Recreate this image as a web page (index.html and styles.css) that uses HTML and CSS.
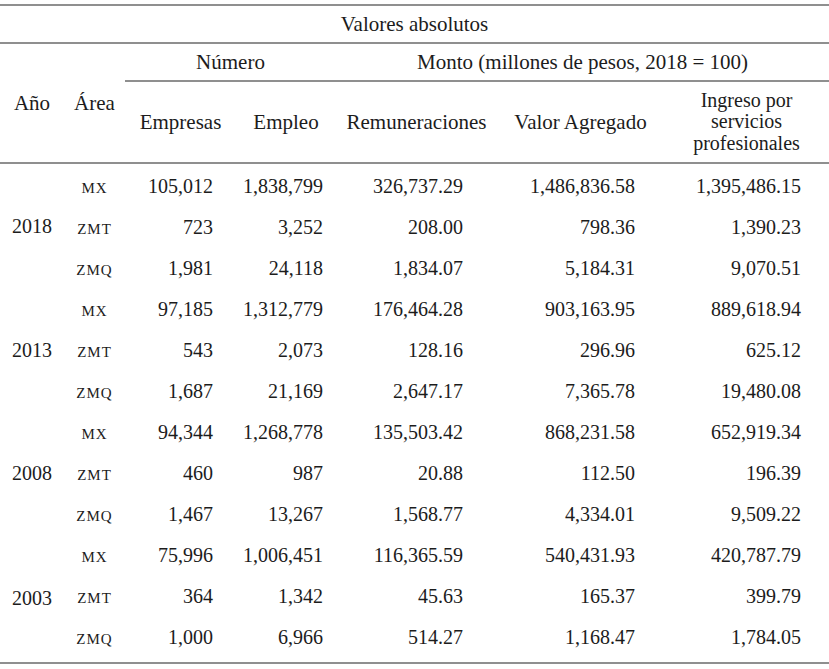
FILE: index.html
```html
<!DOCTYPE html>
<html lang="es">
<head>
<meta charset="utf-8">
<title>Valores absolutos</title>
<link rel="stylesheet" href="styles.css">
</head>
<body>
<table class="tbl">
  <colgroup>
    <col class="c-anio"><col class="c-area"><col class="c-emp"><col class="c-empleo"><col class="c-rem"><col class="c-va"><col class="c-ing">
  </colgroup>
  <thead>
    <tr class="h1">
      <th colspan="7" class="rule-b">Valores absolutos</th>
    </tr>
    <tr class="h2">
      <th rowspan="2" class="hv">Año</th>
      <th rowspan="2" class="hv">Área</th>
      <th colspan="2" class="rule-b">Número</th>
      <th colspan="3" class="rule-b">Monto (millones de pesos, 2018 = 100)</th>
    </tr>
    <tr class="h3">
      <th>Empresas</th>
      <th>Empleo</th>
      <th>Remuneraciones</th>
      <th>Valor Agregado</th>
      <th class="wrap"><span class="ln">Ingreso por</span><span class="ln">servicios</span><span class="ln">profesionales</span></th>
    </tr>
  </thead>
  <tbody>
    <tr class="first"><td rowspan="3" class="yr">2018</td><td class="ar">mx</td><td class="n emp">105,012</td><td class="n empleo">1,838,799</td><td class="n rem">326,737.29</td><td class="n va">1,486,836.58</td><td class="n ing">1,395,486.15</td></tr>
    <tr><td class="ar">zmt</td><td class="n emp">723</td><td class="n empleo">3,252</td><td class="n rem">208.00</td><td class="n va">798.36</td><td class="n ing">1,390.23</td></tr>
    <tr><td class="ar">zmq</td><td class="n emp">1,981</td><td class="n empleo">24,118</td><td class="n rem">1,834.07</td><td class="n va">5,184.31</td><td class="n ing">9,070.51</td></tr>
    <tr><td rowspan="3" class="yr">2013</td><td class="ar">mx</td><td class="n emp">97,185</td><td class="n empleo">1,312,779</td><td class="n rem">176,464.28</td><td class="n va">903,163.95</td><td class="n ing">889,618.94</td></tr>
    <tr><td class="ar">zmt</td><td class="n emp">543</td><td class="n empleo">2,073</td><td class="n rem">128.16</td><td class="n va">296.96</td><td class="n ing">625.12</td></tr>
    <tr><td class="ar">zmq</td><td class="n emp">1,687</td><td class="n empleo">21,169</td><td class="n rem">2,647.17</td><td class="n va">7,365.78</td><td class="n ing">19,480.08</td></tr>
    <tr><td rowspan="3" class="yr">2008</td><td class="ar">mx</td><td class="n emp">94,344</td><td class="n empleo">1,268,778</td><td class="n rem">135,503.42</td><td class="n va">868,231.58</td><td class="n ing">652,919.34</td></tr>
    <tr><td class="ar">zmt</td><td class="n emp">460</td><td class="n empleo">987</td><td class="n rem">20.88</td><td class="n va">112.50</td><td class="n ing">196.39</td></tr>
    <tr><td class="ar">zmq</td><td class="n emp">1,467</td><td class="n empleo">13,267</td><td class="n rem">1,568.77</td><td class="n va">4,334.01</td><td class="n ing">9,509.22</td></tr>
    <tr><td rowspan="3" class="yr">2003</td><td class="ar">mx</td><td class="n emp">75,996</td><td class="n empleo">1,006,451</td><td class="n rem">116,365.59</td><td class="n va">540,431.93</td><td class="n ing">420,787.79</td></tr>
    <tr><td class="ar">zmt</td><td class="n emp">364</td><td class="n empleo">1,342</td><td class="n rem">45.63</td><td class="n va">165.37</td><td class="n ing">399.79</td></tr>
    <tr class="last"><td class="ar">zmq</td><td class="n emp">1,000</td><td class="n empleo">6,966</td><td class="n rem">514.27</td><td class="n va">1,168.47</td><td class="n ing">1,784.05</td></tr>
  </tbody>
</table>
</body>
</html>
```
FILE: styles.css
```css
html, body {
  margin: 0;
  padding: 0;
  background: #ffffff;
}
body {
  padding-top: 4px;
  font-family: "Liberation Serif", "Times New Roman", serif;
  font-size: 20px;
  color: #1c1c1c;
}
.tbl {
  width: 829px;
  border-collapse: collapse;
  table-layout: fixed;
  border-top: 2px solid #8f8f8f;
  border-bottom: 2px solid #8f8f8f;
}
.c-anio { width: 64px; }
.c-area { width: 61px; }
.c-emp { width: 111px; }
.c-empleo { width: 100px; }
.c-rem { width: 161px; }
.c-va { width: 167px; }
.c-ing { width: 165px; }

th, td {
  padding: 0;
  font-weight: normal;
  white-space: nowrap;
}
th {
  text-align: center;
  vertical-align: middle;
  font-size: 21px;
}
.rule-b {
  border-bottom: 2px solid #8f8f8f;
}
.h1 th { height: 36px; }
.h2 th.rule-b { height: 36px; }
.h3 th {
  height: 80px;
  border-bottom: 2px solid #8f8f8f;
}
.h2 th.hv {
  border-bottom: 2px solid #8f8f8f;
}
.wrap {
  font-size: 20px;
}
.wrap .ln {
  display: block;
  line-height: 21.5px;
  height: 21.5px;
}
td {
  height: 41px;
  vertical-align: middle;
}
tr.first td { padding-top: 2px; }
tr.first td.yr { padding-top: 0; }
tr.last td { padding-bottom: 4px; }
.yr { text-align: center; }
.ar {
  text-align: center;
  font-variant: small-caps;
  font-size: 21px;
  letter-spacing: 1px;
}
.n { text-align: right; }
.emp { padding-right: 23px; }
.empleo { padding-right: 13px; }
.rem { padding-right: 34px; }
.va { padding-right: 29px; }
.ing { padding-right: 28px; }
```
